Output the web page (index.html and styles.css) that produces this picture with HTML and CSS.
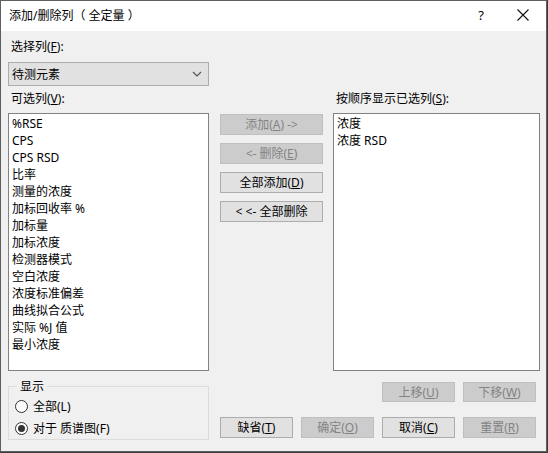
FILE: index.html
```html
<!DOCTYPE html>
<html lang="zh-CN">
<head>
<meta charset="utf-8">
<title>添加/删除列（全定量）</title>
<link rel="stylesheet" href="styles.css">
</head>
<body>
<div class="dialog">
  <div class="titlebar">
    <span class="title">添加/删除列（ 全定量 ）</span>
    <span class="help">?</span>
    <span class="close"><svg width="12" height="12" viewBox="0 0 12 12"><path d="M0.5 0.5L11.5 11.5M11.5 0.5L0.5 11.5" stroke="#111" stroke-width="1.1" fill="none"/></svg></span>
  </div>
  <div class="body">
    <div class="lbl first">选择列(<u>F</u>):</div>
    <div class="combo">
      <span>待测元素</span>
      <svg width="10" height="6" viewBox="0 0 10 6"><path d="M1 1L5 5L9 1" stroke="#555" stroke-width="1.2" fill="none"/></svg>
    </div>
    <div class="main">
      <div class="col-left">
        <div class="lbl">可选列(<u>V</u>):</div>
        <ul class="list left-list">
          <li>%RSE</li>
          <li>CPS</li>
          <li>CPS RSD</li>
          <li>比率</li>
          <li>测量的浓度</li>
          <li>加标回收率 %</li>
          <li>加标量</li>
          <li>加标浓度</li>
          <li>检测器模式</li>
          <li>空白浓度</li>
          <li>浓度标准偏差</li>
          <li>曲线拟合公式</li>
          <li>实际 %J 值</li>
          <li>最小浓度</li>
        </ul>
      </div>
      <div class="col-mid">
        <button class="btn disabled">添加(<u>A</u>) -&gt;</button>
        <button class="btn disabled">&lt;- 删除(<u>E</u>)</button>
        <button class="btn">全部添加(<u>D</u>)</button>
        <button class="btn">&lt; &lt;- 全部删除</button>
      </div>
      <div class="col-right">
        <div class="lbl">按顺序显示已选列(<u>S</u>):</div>
        <ul class="list right-list">
          <li>浓度</li>
          <li>浓度 RSD</li>
        </ul>
      </div>
    </div>
    <div class="bottom">
      <fieldset class="group">
        <legend>显示</legend>
        <div class="radio-row"><span class="radio"></span><span class="rtext">全部(L)</span></div>
        <div class="radio-row"><span class="radio checked"></span><span class="rtext">对于 质谱图(F)</span></div>
      </fieldset>
      <div class="actions">
        <div class="row-move">
          <button class="btn small disabled">上移(<u>U</u>)</button>
          <button class="btn small disabled">下移(<u>W</u>)</button>
        </div>
        <div class="row-main">
          <button class="btn small">缺省(<u>T</u>)</button>
          <button class="btn small disabled">确定(<u>O</u>)</button>
          <button class="btn small">取消(<u>C</u>)</button>
          <button class="btn small disabled">重置(<u>R</u>)</button>
        </div>
      </div>
    </div>
  </div>
</div>
</body>
</html>
```
FILE: styles.css
```css
* { box-sizing: border-box; }
html, body {
  margin: 0;
  padding: 0;
  background: #3c3c3c;
}
body {
  font-family: "Noto Sans", "Noto Sans CJK SC", sans-serif;
  font-size: 12px;
  color: #000;
}
.dialog {
  width: 547px;
  height: 452px;
  border: 1px solid #5f5f5f;
  background: #f0f0f0;
  overflow: hidden;
}
.titlebar {
  height: 30px;
  background: #fff;
  display: flex;
  align-items: center;
  padding-left: 8px;
  padding-bottom: 2px;
}
.title {
  flex: 1;
  font-size: 12px;
  line-height: 17px;
  white-space: pre;
}
.help {
  font-size: 13px;
  width: 12px;
  text-align: center;
  margin-right: 30px;
  margin-left: 2px;
}
.close {
  display: flex;
  width: 12px;
  height: 12px;
  margin-right: 17px;
}
.body {
  padding: 0 0 0 7px;
}
.lbl {
  line-height: 17px;
  height: 17px;
  padding-left: 3px;
  white-space: nowrap;
}
.lbl.first {
  margin-top: 7px;
}
u { text-decoration: underline; text-underline-offset: 1px; }
.combo {
  margin-top: 7px;
  width: 201px;
  height: 24px;
  background: #e1e1e1;
  border: 1px solid #adadad;
  display: flex;
  align-items: center;
  justify-content: space-between;
  padding: 0 6px 0 3px;
  line-height: 17px;
}
.main {
  display: flex;
  margin-top: 4px;
}
.col-left { width: 201px; }
.col-mid {
  width: 103px;
  margin-left: 11px;
  padding-top: 24px;
  display: flex;
  flex-direction: column;
  gap: 8px;
}
.col-right {
  width: 207px;
  margin-left: 10px;
}
.list {
  list-style: none;
  margin: 6px 0 0 0;
  padding: 1px 0 0 3px;
  height: 258px;
  background: #fff;
  border: 1px solid #828282;
}
.list li {
  line-height: 17px;
  height: 17px;
  white-space: nowrap;
}
.btn {
  font: inherit;
  color: #000;
  background: #e1e1e1;
  border: 1px solid #adadad;
  height: 21px;
  padding: 0;
  line-height: 17px;
  width: 103px;
  text-align: center;
  white-space: nowrap;
}
.btn.disabled {
  background: #cccccc;
  border-color: #bfbfbf;
  color: #838383;
}
.btn.small { width: 73px; }
.bottom {
  display: flex;
}
.group {
  margin: 7px 0 0 0;
  width: 201px;
  height: 62px;
  border: 1px solid #dcdcdc;
  padding: 0 0 0 6px;
}
.group legend {
  padding: 0 3px;
  margin-left: 2px;
  line-height: 17px;
}
.radio-row {
  height: 22px;
  display: flex;
  align-items: center;
}
.radio {
  width: 13px;
  height: 13px;
  border: 1px solid #333;
  border-radius: 50%;
  background: #fff;
  display: flex;
  align-items: center;
  justify-content: center;
}
.radio.checked::after {
  content: "";
  width: 7px;
  height: 7px;
  border-radius: 50%;
  background: #333;
}
.rtext {
  margin-left: 5px;
  line-height: 17px;
  white-space: nowrap;
}
.actions {
  margin-left: 11px;
  width: 316px;
}
.row-move {
  margin-top: 11px;
  display: flex;
  justify-content: flex-end;
  gap: 8px;
}
.row-move .btn { height: 20px; }
.row-main {
  margin-top: 15px;
  display: flex;
  gap: 8px;
}
```
